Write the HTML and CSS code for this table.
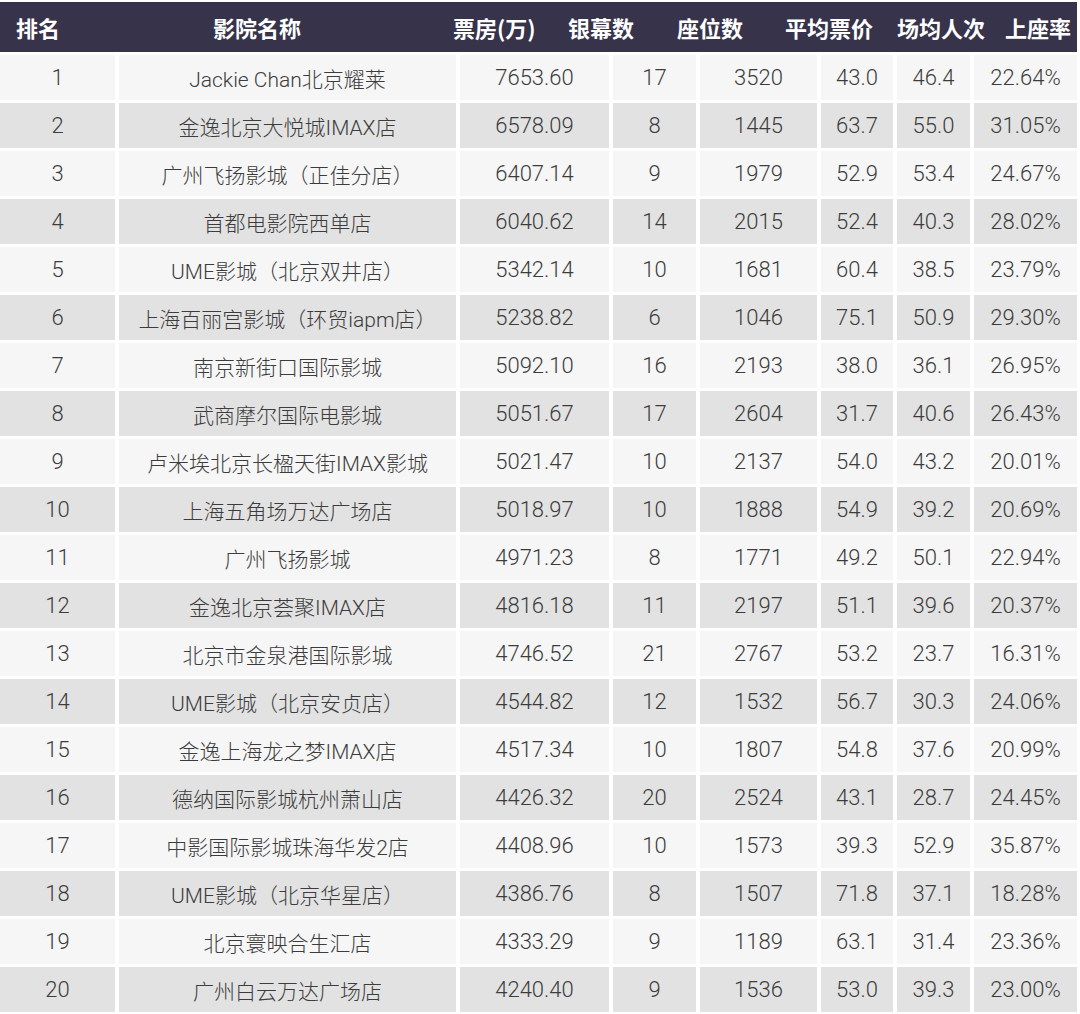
FILE: index.html
```html
<!DOCTYPE html>
<html lang="zh-CN">
<head>
<meta charset="utf-8">
<title>影院票房排名</title>
<link rel="stylesheet" href="styles.css">
</head>
<body>
<div class="sheet">
  <div class="head">
    <span>排名</span><span>影院名称</span><span>票房(万)</span><span>银幕数</span><span>座位数</span><span>平均票价</span><span>场均人次</span><span>上座率</span>
  </div>
  <div class="grid">
    <div class="c">1</div><div class="c n">Jackie Chan北京耀莱</div><div class="c">7653.60</div><div class="c">17</div><div class="c">3520</div><div class="c">43.0</div><div class="c">46.4</div><div class="c">22.64%</div>
    <div class="c e">2</div><div class="c e n">金逸北京大悦城IMAX店</div><div class="c e">6578.09</div><div class="c e">8</div><div class="c e">1445</div><div class="c e">63.7</div><div class="c e">55.0</div><div class="c e">31.05%</div>
    <div class="c">3</div><div class="c n">广州飞扬影城（正佳分店）</div><div class="c">6407.14</div><div class="c">9</div><div class="c">1979</div><div class="c">52.9</div><div class="c">53.4</div><div class="c">24.67%</div>
    <div class="c e">4</div><div class="c e n">首都电影院西单店</div><div class="c e">6040.62</div><div class="c e">14</div><div class="c e">2015</div><div class="c e">52.4</div><div class="c e">40.3</div><div class="c e">28.02%</div>
    <div class="c">5</div><div class="c n">UME影城（北京双井店）</div><div class="c">5342.14</div><div class="c">10</div><div class="c">1681</div><div class="c">60.4</div><div class="c">38.5</div><div class="c">23.79%</div>
    <div class="c e">6</div><div class="c e n">上海百丽宫影城（环贸iapm店）</div><div class="c e">5238.82</div><div class="c e">6</div><div class="c e">1046</div><div class="c e">75.1</div><div class="c e">50.9</div><div class="c e">29.30%</div>
    <div class="c">7</div><div class="c n">南京新街口国际影城</div><div class="c">5092.10</div><div class="c">16</div><div class="c">2193</div><div class="c">38.0</div><div class="c">36.1</div><div class="c">26.95%</div>
    <div class="c e">8</div><div class="c e n">武商摩尔国际电影城</div><div class="c e">5051.67</div><div class="c e">17</div><div class="c e">2604</div><div class="c e">31.7</div><div class="c e">40.6</div><div class="c e">26.43%</div>
    <div class="c">9</div><div class="c n">卢米埃北京长楹天街IMAX影城</div><div class="c">5021.47</div><div class="c">10</div><div class="c">2137</div><div class="c">54.0</div><div class="c">43.2</div><div class="c">20.01%</div>
    <div class="c e">10</div><div class="c e n">上海五角场万达广场店</div><div class="c e">5018.97</div><div class="c e">10</div><div class="c e">1888</div><div class="c e">54.9</div><div class="c e">39.2</div><div class="c e">20.69%</div>
    <div class="c">11</div><div class="c n">广州飞扬影城</div><div class="c">4971.23</div><div class="c">8</div><div class="c">1771</div><div class="c">49.2</div><div class="c">50.1</div><div class="c">22.94%</div>
    <div class="c e">12</div><div class="c e n">金逸北京荟聚IMAX店</div><div class="c e">4816.18</div><div class="c e">11</div><div class="c e">2197</div><div class="c e">51.1</div><div class="c e">39.6</div><div class="c e">20.37%</div>
    <div class="c">13</div><div class="c n">北京市金泉港国际影城</div><div class="c">4746.52</div><div class="c">21</div><div class="c">2767</div><div class="c">53.2</div><div class="c">23.7</div><div class="c">16.31%</div>
    <div class="c e">14</div><div class="c e n">UME影城（北京安贞店）</div><div class="c e">4544.82</div><div class="c e">12</div><div class="c e">1532</div><div class="c e">56.7</div><div class="c e">30.3</div><div class="c e">24.06%</div>
    <div class="c">15</div><div class="c n">金逸上海龙之梦IMAX店</div><div class="c">4517.34</div><div class="c">10</div><div class="c">1807</div><div class="c">54.8</div><div class="c">37.6</div><div class="c">20.99%</div>
    <div class="c e">16</div><div class="c e n">德纳国际影城杭州萧山店</div><div class="c e">4426.32</div><div class="c e">20</div><div class="c e">2524</div><div class="c e">43.1</div><div class="c e">28.7</div><div class="c e">24.45%</div>
    <div class="c">17</div><div class="c n">中影国际影城珠海华发2店</div><div class="c">4408.96</div><div class="c">10</div><div class="c">1573</div><div class="c">39.3</div><div class="c">52.9</div><div class="c">35.87%</div>
    <div class="c e">18</div><div class="c e n">UME影城（北京华星店）</div><div class="c e">4386.76</div><div class="c e">8</div><div class="c e">1507</div><div class="c e">71.8</div><div class="c e">37.1</div><div class="c e">18.28%</div>
    <div class="c">19</div><div class="c n">北京寰映合生汇店</div><div class="c">4333.29</div><div class="c">9</div><div class="c">1189</div><div class="c">63.1</div><div class="c">31.4</div><div class="c">23.36%</div>
    <div class="c e">20</div><div class="c e n">广州白云万达广场店</div><div class="c e">4240.40</div><div class="c e">9</div><div class="c e">1536</div><div class="c e">53.0</div><div class="c e">39.3</div><div class="c e">23.00%</div>
  </div>
</div>
</body>
</html>
```

FILE: styles.css
```css
html, body {
  margin: 0;
  padding: 0;
  background: #ffffff;
}

.sheet {
  width: 1077px;
  padding-top: 2px;
}

.head {
  display: grid;
  grid-template-columns: 197px 240px 115px 109px 108px 112px 108px auto;
  align-items: center;
  height: 50px;
  padding-left: 16px;
  background: #37334b;
  color: #ffffff;
  font-family: "Noto Sans CJK SC", sans-serif;
  font-weight: 700;
  font-size: 22px;
  line-height: 1;
  white-space: nowrap;
}

.grid {
  display: grid;
  grid-template-columns: 115px 337px 149px 83px 117px 72px 73px 103px;
  grid-auto-rows: 45px;
  column-gap: 4px;
  row-gap: 3px;
  margin-top: 3px;
}

.c {
  display: flex;
  align-items: center;
  justify-content: center;
  background: #f6f6f6;
  color: #3c3c3c;
  font-family: Roboto, "Noto Sans CJK SC", sans-serif;
  font-weight: 300;
  font-size: 22px;
  white-space: nowrap;
}

.c.n {
  font-size: 21px;
}

.c.e {
  background: #e2e2e2;
}
```
